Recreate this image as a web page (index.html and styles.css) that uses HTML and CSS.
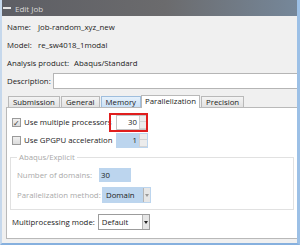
FILE: index.html
```html
<!DOCTYPE html>
<html lang="en">
<head>
	<meta charset="UTF-8">
	<title>Edit Job</title>
	<link rel="stylesheet" href="styles.css">
</head>
<body>
	<div class="window">
		<div class="titlebar">
			<span class="sysicon"></span>
			<span class="title">Edit Job</span>
		</div>

		<div class="content">
			<div class="row"><span class="key">Name:</span><span>Job-random_xyz_new</span></div>
			<div class="row"><span class="key">Model:</span><span>re_sw4018_1modal</span></div>
			<div class="row"><span>Analysis product:</span><span>Abaqus/Standard</span></div>
			<div class="row desc">
				<span>Description:</span>
				<div class="textbox"></div>
			</div>

			<ul class="tabs">
				<li>Submission</li>
				<li>General</li>
				<li class="hover">Memory</li>
				<li class="active">Parallelization</li>
				<li>Precision</li>
			</ul>

			<div class="panel">
				<div class="prow">
					<span class="check on"></span>
					<span class="lbl">Use multiple processors</span>
					<div class="spin"><span class="val">30</span><span class="arrows"><i></i><i></i></span></div>
					<div class="mark"></div>
				</div>
				<div class="prow">
					<span class="check"></span>
					<span class="lbl">Use GPGPU acceleration</span>
					<div class="spin off"><span class="val">1</span><span class="arrows"><i></i><i></i></span></div>
				</div>

				<fieldset class="group">
					<legend>Abaqus/Explicit</legend>
					<div class="form">
						<span class="dim">Number of domains:</span>
						<div class="field off">30</div>
						<span class="dim">Parallelization method:</span>
						<div class="combo off"><span class="val">Domain</span><span class="drop"></span></div>
					</div>
				</fieldset>

				<div class="prow">
					<span>Multiprocessing mode:</span>
					<div class="combo"><span class="val">Default</span><span class="drop"></span></div>
				</div>
			</div>
		</div>
	</div>
</body>
</html>
```

FILE: styles.css
```css
body, ul, li, fieldset, legend {
	margin: 0;
	padding: 0;
}
body {
	font-family: "Open Sans", "Noto Sans", sans-serif;
	font-size: 7.8px;
	color: #1b1b1b;
}

.window {
	position: relative;
	width: 300px;
	height: 245px;
	box-sizing: border-box;
	background: #f0f0f0;
	border-left: 2px solid #c6d8ec;
	border-right: 3px solid #9cc0e6;
	border-bottom: 2px solid #86b0de;
	overflow: hidden;
}

.titlebar {
	height: 16px;
	margin-left: -2px;
	margin-right: -3px;
	display: flex;
	align-items: center;
	background: linear-gradient(to right, #5d5e64, #6b6b6d 55%, #76889b);
}
.sysicon {
	width: 8px;
	height: 2px;
	margin: 0 4px 0 3px;
	background: #e6e6e6;
}
.title {
	font-size: 8px;
	color: #d8d8d8;
}

.content {
	padding: 2px 0 0 2px;
}

.row {
	height: 18px;
	display: flex;
	align-items: center;
	gap: 5px;
	padding-left: 3px;
}
.row .key {
	width: 26px;
}
.row.desc {
	gap: 2px;
}
.textbox {
	flex: 1;
	height: 14px;
	background: #fff;
	border: 1px solid #b5b5b5;
	border-right: none;
}

.tabs {
	display: flex;
	align-items: flex-end;
	height: 12px;
	margin: 5px 0 0 4px;
	list-style: none;
}
.tabs li {
	height: 10px;
	line-height: 10px;
	padding: 0 4px;
	margin-right: 1px;
	border: 1px solid #b9b9b9;
	border-bottom: none;
	background: linear-gradient(#f4f4f4, #e2e2e2);
}
.tabs li.hover {
	background: linear-gradient(#e6f1fb, #c9e0f6);
	border-color: #9fbedd;
}
.tabs li.active {
	height: 12px;
	line-height: 11px;
	background: #fff;
	position: relative;
	top: 1px;
	margin: 0 1px 0 -1px;
	padding: 0 3px;
}

.panel {
	height: 132px;
	margin-left: 2px;
	background: #fff;
	border: 1px solid #b9b9b9;
	border-right: none;
	padding: 6px 0 0 5px;
	box-sizing: border-box;
}

.prow {
	position: relative;
	height: 16px;
	display: flex;
	align-items: center;
	gap: 3px;
	margin-bottom: 2px;
}

.check {
	width: 7px;
	height: 7px;
	border: 1px solid #9a9a9a;
	background: linear-gradient(#f0f0f0, #dcdcdc);
	font-size: 8px;
	line-height: 7px;
	text-align: center;
	color: #3a3a3a;
}
.check.on::after {
	content: "\2713";
}
.lbl {
	width: 89px;
}

.spin {
	display: flex;
	width: 30px;
	height: 13px;
	border: 1px solid #c4c4c4;
	background: #fff;
}
.spin .val {
	flex: 1;
	text-align: right;
	line-height: 13px;
	padding-right: 2px;
}
.spin.off {
	background: #bcd5ee;
	border-color: #bcd5ee;
}
.arrows {
	width: 7px;
	display: flex;
	flex-direction: column;
	background: #ececec;
	border-left: 1px solid #d0d0d0;
}
.arrows i {
	flex: 1;
	border-bottom: 1px solid #d4d4d4;
}

.mark {
	position: absolute;
	left: 97px;
	top: -1px;
	width: 35px;
	height: 15px;
	border: 2px solid #e01e1e;
}

.group {
	margin: 4px 3px 4px -2px;
	padding: 5px 0 0 6px;
	border: 1px solid #e1e1e1;
	height: 58px;
	box-sizing: border-box;
}
.group legend {
	color: #a9a9a9;
	padding: 0 2px;
	margin-left: 0;
}

.form {
	display: grid;
	grid-template-columns: 80px auto;
	align-items: center;
	justify-items: start;
	column-gap: 2px;
	row-gap: 4px;
	grid-auto-rows: 16px;
}
.form .dim {
	color: #a9a9a9;
	white-space: nowrap;
}

.field {
	width: 30px;
	height: 14px;
	line-height: 14px;
	padding-left: 2px;
}
.field.off {
	background: #bcd5ee;
}

.combo {
	display: flex;
	width: 50px;
	height: 14px;
	border: 1px solid #9c9c9c;
	background: #fff;
}
.combo .val {
	flex: 1;
	line-height: 14px;
	padding-left: 3px;
}
.combo.off {
	width: 47px;
	margin-left: 3px;
	background: #bcd5ee;
	border-color: #bcd5ee;
}
.drop {
	width: 6px;
	position: relative;
	background: #e6e6e6;
	border-left: 1px solid #b5b5b5;
}
.drop::after {
	content: "";
	position: absolute;
	left: 1px;
	top: 6px;
	border: 2px solid transparent;
	border-top: 3px solid #222;
}
.combo.off .drop::after {
	border-top-color: #9a9a9a;
}
```
